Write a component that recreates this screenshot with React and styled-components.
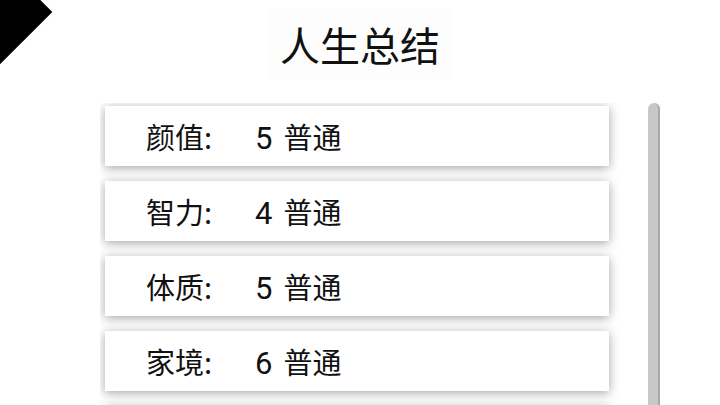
import React from "react";
import styled, { createGlobalStyle } from "styled-components";

const GlobalStyle = createGlobalStyle`
  html, body {
    margin: 0;
    padding: 0;
    background: #fff;
    overflow: hidden;
  }
  body {
    font-family: "Noto Sans CJK SC", "Noto Sans", sans-serif;
    color: #111;
  }
`;

const Page = styled.div`
  position: relative;
  width: 720px;
  height: 405px;
  display: flex;
  flex-direction: column;
  overflow: hidden;
`;

const Corner = styled.div`
  position: absolute;
  left: -37px;
  top: -25px;
  width: 74px;
  height: 74px;
  background: #000;
  transform: rotate(45deg);
`;

const Header = styled.div`
  display: flex;
  justify-content: center;
  padding-top: 9px;
  height: 92px;
  box-sizing: border-box;
`;

const Title = styled.h1`
  margin: 0;
  width: 185px;
  height: 70px;
  display: flex;
  align-items: center;
  justify-content: center;
  font-size: 40px;
  font-weight: 400;
  background: #fdfdfd;
`;

const Panel = styled.div`
  margin-left: 100px;
  width: 560px;
  flex: 1;
  min-height: 0;
  display: flex;
  padding-top: 11px;
  box-sizing: border-box;
`;

const List = styled.ul`
  list-style: none;
  margin: 0;
  padding: 3px 0 20px 5px;
  flex: 1;
  overflow: hidden;
  display: flex;
  flex-direction: column;
  gap: 15px;
`;

const ScrollBar = styled.div`
  width: 12px;
  flex-shrink: 0;
  background: #c8c8c8;
  border-right: 2px solid #a8a8a8;
  box-sizing: border-box;
  border-radius: 6px 6px 0 0;
`;

const Card = styled.li`
  width: 504px;
  height: 60px;
  flex-shrink: 0;
  background: #fff;
  box-shadow: 0 2px 10px rgba(0, 0, 0, 0.36);
  display: flex;
  align-items: center;
  padding-left: 41px;
  box-sizing: border-box;
  font-size: 29px;
`;

const Label = styled.span`
  width: 109px;
`;

const Value = styled.span`
  display: flex;
  align-items: baseline;
  gap: 11px;
`;

const Num = styled.span`
  font-family: "Roboto", "Noto Sans CJK SC", sans-serif;
  font-size: 31px;
`;

const stats = [
  ["颜值", "5", "普通"],
  ["智力", "4", "普通"],
  ["体质", "5", "普通"],
  ["家境", "6", "普通"],
  ["快乐", "7", "幸福"],
  ["享年", "68", "年"],
  ["总评", "35", "普通"],
];

export default function App() {
  return (
    <>
      <GlobalStyle />
      <Page>
        <Corner />
        <Header>
          <Title>人生总结</Title>
        </Header>
        <Panel>
          <List>
            {stats.map(([label, num, grade]) => (
              <Card key={label}>
                <Label>{label}:</Label>
                <Value>
                  <Num>{num}</Num>
                  <span>{grade}</span>
                </Value>
              </Card>
            ))}
          </List>
          <ScrollBar />
        </Panel>
      </Page>
    </>
  );
}
